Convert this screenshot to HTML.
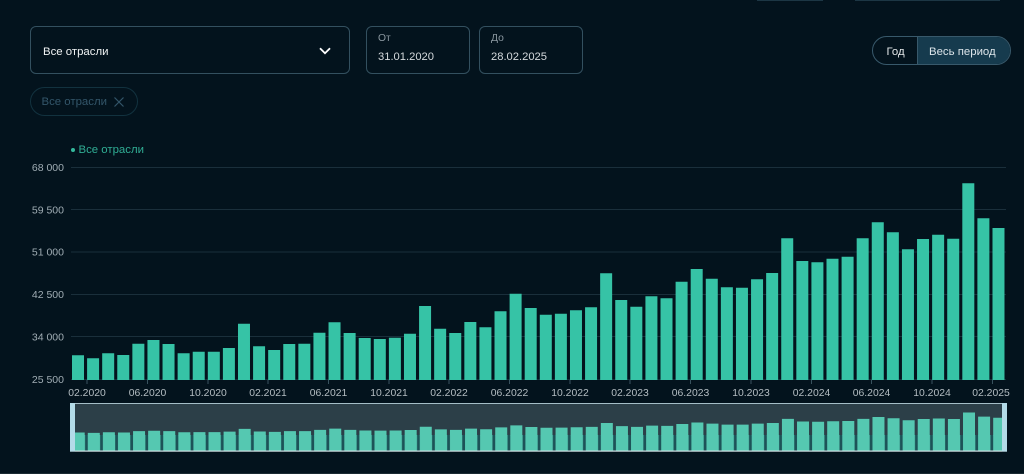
<!DOCTYPE html>
<html lang="ru">
<head>
<meta charset="utf-8">
<title>Все отрасли</title>
<style>
html,body{margin:0;padding:0;background:#03131d}
body{width:1024px;height:474px;overflow:hidden;position:relative;font-family:"Liberation Sans",Arial,sans-serif}
#wrap{position:absolute;left:0;top:0;width:1024px;height:474px;filter:blur(.3px)}
.abs{position:absolute;box-sizing:border-box}
.box{border:1px solid #33505f;border-radius:6px;background:#03131d}
.t{position:absolute;white-space:nowrap;line-height:14px}
</style>
</head>
<body>
<div id="wrap">
<div class="abs" style="left:757px;top:0;width:66px;height:1px;background:#1c3644"></div>
<div class="abs" style="left:855px;top:0;width:145px;height:1px;background:#1c3644"></div>

<div class="abs box" style="left:30px;top:26px;width:320px;height:48px"></div>
<div class="t" style="left:43px;top:44.500px;font-size:11.400px;color:#f0f3f4">Все отрасли</div>
<svg class="abs" style="left:318px;top:45px" width="14" height="12" viewBox="0 0 14 12"><path d="M2 3.200L7 8.200L12 3.200" fill="none" stroke="#fff" stroke-width="1.800"/></svg>

<div class="abs box" style="left:366px;top:26px;width:103.500px;height:48px"></div>
<div class="t" style="left:378px;top:32px;font-size:10.300px;color:#8b98a0">От</div>
<div class="t" style="left:378px;top:50px;font-size:11.200px;color:#d5dadd">31.01.2020</div>
<div class="abs box" style="left:479px;top:26px;width:103.500px;height:48px"></div>
<div class="t" style="left:491px;top:32px;font-size:10.300px;color:#8b98a0">До</div>
<div class="t" style="left:491px;top:50px;font-size:11.200px;color:#d5dadd">28.02.2025</div>

<div class="abs" style="left:30px;top:87px;width:108px;height:29px;border:1px solid #12323f;border-radius:15px"></div>
<div class="t" style="left:41.500px;top:95px;font-size:11.400px;color:#33566a">Все отрасли</div>
<svg class="abs" style="left:113px;top:96px" width="12" height="12" viewBox="0 0 12 12"><path d="M1.500 1.500L10.500 10.500M10.500 1.500L1.500 10.500" fill="none" stroke="#33566a" stroke-width="1.200"/></svg>

<div class="abs" style="left:872px;top:36px;width:139px;height:29px;border:1px solid #38596b;border-radius:15px;overflow:hidden;background:#03131d">
  <div class="abs" style="left:44px;top:0;width:95px;height:29px;background:#163b4e;border-left:1px solid #38596b"></div>
</div>
<div class="t" style="left:886.500px;top:44.500px;font-size:11.400px;color:#e3e7e9">Год</div>
<div class="t" style="left:929px;top:44.500px;font-size:11.400px;color:#dbe4e9">Весь период</div>

<div class="abs" style="left:71px;top:147.500px;width:4px;height:4px;border-radius:50%;background:#34b89c"></div>
<div class="t" style="left:78.500px;top:143px;font-size:11.400px;color:#30ad94">Все отрасли</div>

<svg class="abs" style="left:0;top:0" width="1024" height="474" viewBox="0 0 1024 474">
  <defs>
    <pattern id="stems" patternUnits="userSpaceOnUse" x="71.200" y="0" width="15.090" height="10">
      <rect x="1.500" y="0" width="12.300" height="10" fill="#55c8b1"/>
    </pattern>
    <path id="bars" d="M72 355.300h12V380H72zM87.090 358.300h12V380h-12zM102.180 353.300h12V380h-12zM117.270 355h12V380h-12zM132.360 343.700h12V380h-12zM147.450 340h12V380h-12zM162.540 344h12V380h-12zM177.630 353.300h12V380h-12zM192.720 351.700h12V380h-12zM207.810 351.700h12V380h-12zM222.900 348h12V380h-12zM237.990 323.700h12V380h-12zM253.080 346.300h12V380h-12zM268.170 350h12V380h-12zM283.260 344h12V380h-12zM298.350 343.700h12V380h-12zM313.440 332.700h12V380h-12zM328.530 322.300h12V380h-12zM343.620 333h12V380h-12zM358.710 338h12V380h-12zM373.800 339h12V380h-12zM388.890 337.700h12V380h-12zM403.980 333.700h12V380h-12zM419.070 306h12V380h-12zM434.160 328.700h12V380h-12zM449.250 333h12V380h-12zM464.340 322h12V380h-12zM479.430 327.300h12V380h-12zM494.520 311.300h12V380h-12zM509.610 293.700h12V380h-12zM524.700 308h12V380h-12zM539.790 314.700h12V380h-12zM554.880 313.700h12V380h-12zM569.970 310.300h12V380h-12zM585.060 307.300h12V380h-12zM600.150 273.300h12V380h-12zM615.240 300h12V380h-12zM630.330 306.700h12V380h-12zM645.420 296.300h12V380h-12zM660.510 298.300h12V380h-12zM675.600 281.700h12V380h-12zM690.690 269h12V380h-12zM705.780 278.700h12V380h-12zM720.870 287.300h12V380h-12zM735.960 287.700h12V380h-12zM751.050 279.300h12V380h-12zM766.140 273h12V380h-12zM781.230 238.300h12V380h-12zM796.320 261h12V380h-12zM811.410 262.300h12V380h-12zM826.500 258.700h12V380h-12zM841.590 256.700h12V380h-12zM856.680 238.300h12V380h-12zM871.770 222.300h12V380h-12zM886.860 232.300h12V380h-12zM901.950 249.300h12V380h-12zM917.040 239h12V380h-12zM932.130 234.700h12V380h-12zM947.220 238.700h12V380h-12zM962.310 183.300h12V380h-12zM977.400 218.300h12V380h-12zM992.490 228h12V380h-12z"/>
  </defs>

  <path d="M71 167.500H1006M71 209.500H1006M71 252H1006M71 294.500H1006M71 336.500H1006M71 379.500H1006" fill="none" stroke="#1a2f3b" stroke-width="1"/>

  <use href="#bars" fill="#36c3a6"/>

  <path d="M87 380v4M147.500 380v4M208 380v4M268 380v4M328.500 380v4M389 380v4M449 380v4M509.500 380v4M570 380v4M630 380v4M690.500 380v4M751 380v4M811.500 380v4M871.500 380v4M932 380v4M992.500 380v4" stroke="#38525e" stroke-width="1" fill="none"/>

  <g font-family="'Liberation Sans',Arial,sans-serif" font-size="10.500" fill="#a0adb4" text-anchor="end">
    <text x="64" y="171">68 000</text>
    <text x="64" y="213.500">59 500</text>
    <text x="64" y="255.700">51 000</text>
    <text x="64" y="298">42 500</text>
    <text x="64" y="340.500">34 000</text>
    <text x="64" y="383">25 500</text>
  </g>
  <g font-family="'Liberation Sans',Arial,sans-serif" font-size="10.400" fill="#b4bdc2" text-anchor="middle">
    <text x="87" y="396">02.2020</text>
    <text x="147.500" y="396">06.2020</text>
    <text x="208" y="396">10.2020</text>
    <text x="268" y="396">02.2021</text>
    <text x="328.500" y="396">06.2021</text>
    <text x="389" y="396">10.2021</text>
    <text x="449" y="396">02.2022</text>
    <text x="509.500" y="396">06.2022</text>
    <text x="570" y="396">10.2022</text>
    <text x="630" y="396">02.2023</text>
    <text x="690.500" y="396">06.2023</text>
    <text x="751" y="396">10.2023</text>
    <text x="811.500" y="396">02.2024</text>
    <text x="871.500" y="396">06.2024</text>
    <text x="932" y="396">10.2024</text>
    <text x="991" y="396">02.2025</text>
  </g>

  <rect x="70" y="403" width="937" height="48" fill="#2c3f48"/>
  <rect x="71" y="435" width="935" height="16" fill="#1d5358"/>
  <use href="#bars" fill="#55c8b1" transform="matrix(1 0 0 .116 .7 391.27)"/>
  <rect x="71" y="435" width="935" height="16" fill="url(#stems)"/>
  <rect x="70" y="403" width="937" height="1" fill="#a5bec7"/>
  <rect x="70" y="450.500" width="937" height="1.200" fill="#d3e2e5"/>
  <rect x="70" y="403" width="5" height="48.500" fill="#b3dbe8"/>
  <rect x="1002" y="403" width="5" height="48.500" fill="#b3dbe8"/>
  <rect x="0" y="473" width="1024" height="1" fill="#1a2a32"/>
</svg>
</div>
</body>
</html>
